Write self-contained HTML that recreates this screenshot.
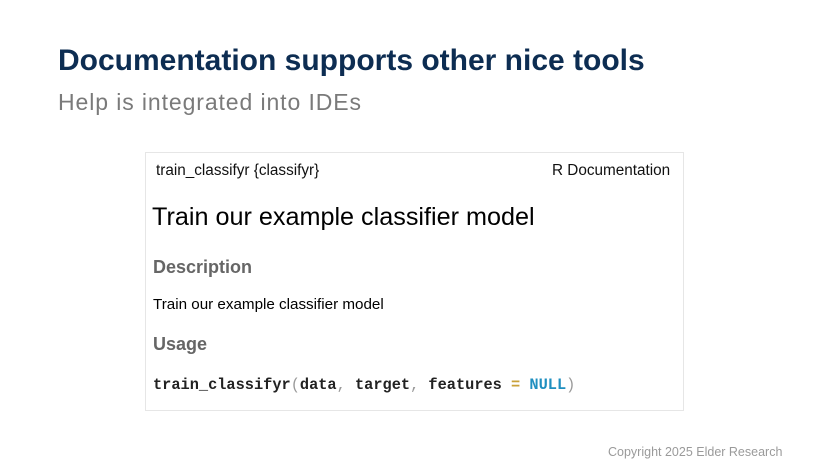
<!DOCTYPE html>
<html><head><meta charset="utf-8"><style>
body{margin:0;width:840px;height:473px;background:#fff;position:relative;overflow:hidden;font-family:"Liberation Sans",sans-serif}
.a{position:absolute;white-space:nowrap}
</style></head><body>
<div class="a" style="left:58px;top:44px;font-size:30px;font-weight:bold;color:#0d2d52;letter-spacing:0px">Documentation supports other nice tools</div>
<div class="a" style="left:58px;top:89px;font-size:23px;color:#7a7a7a;letter-spacing:0.9px">Help is integrated into IDEs</div>
<div class="a" style="left:145px;top:152px;width:539px;height:259px;border:1px solid #e6e6e6;box-sizing:border-box"></div>
<div class="a" style="left:156px;top:162px;font-size:15.3px;color:#111">train_classifyr {classifyr}</div>
<div class="a" style="left:552px;top:162px;font-size:15.3px;color:#111">R Documentation</div>
<div class="a" style="left:152px;top:203px;font-size:25.2px;color:#000">Train our example classifier model</div>
<div class="a" style="left:153px;top:257px;font-size:18px;font-weight:bold;color:#666">Description</div>
<div class="a" style="left:153px;top:296px;font-size:15.2px;color:#000">Train our example classifier model</div>
<div class="a" style="left:153px;top:334px;font-size:18px;font-weight:bold;color:#666">Usage</div>
<div class="a" style="left:153px;top:376px;font-size:15.3px;font-family:'Liberation Mono',monospace;font-weight:bold;color:#222">train_classifyr<span style="color:#999;font-weight:normal">(</span>data<span style="color:#999;font-weight:normal">,</span> target<span style="color:#999;font-weight:normal">,</span> features <span style="color:#c9a13a">=</span> <span style="color:#1f8fc0">NULL</span><span style="color:#999;font-weight:normal">)</span></div>
<div class="a" style="left:608px;top:445px;font-size:12.5px;color:#9a9a9a">Copyright 2025 Elder Research</div>
</body></html>
